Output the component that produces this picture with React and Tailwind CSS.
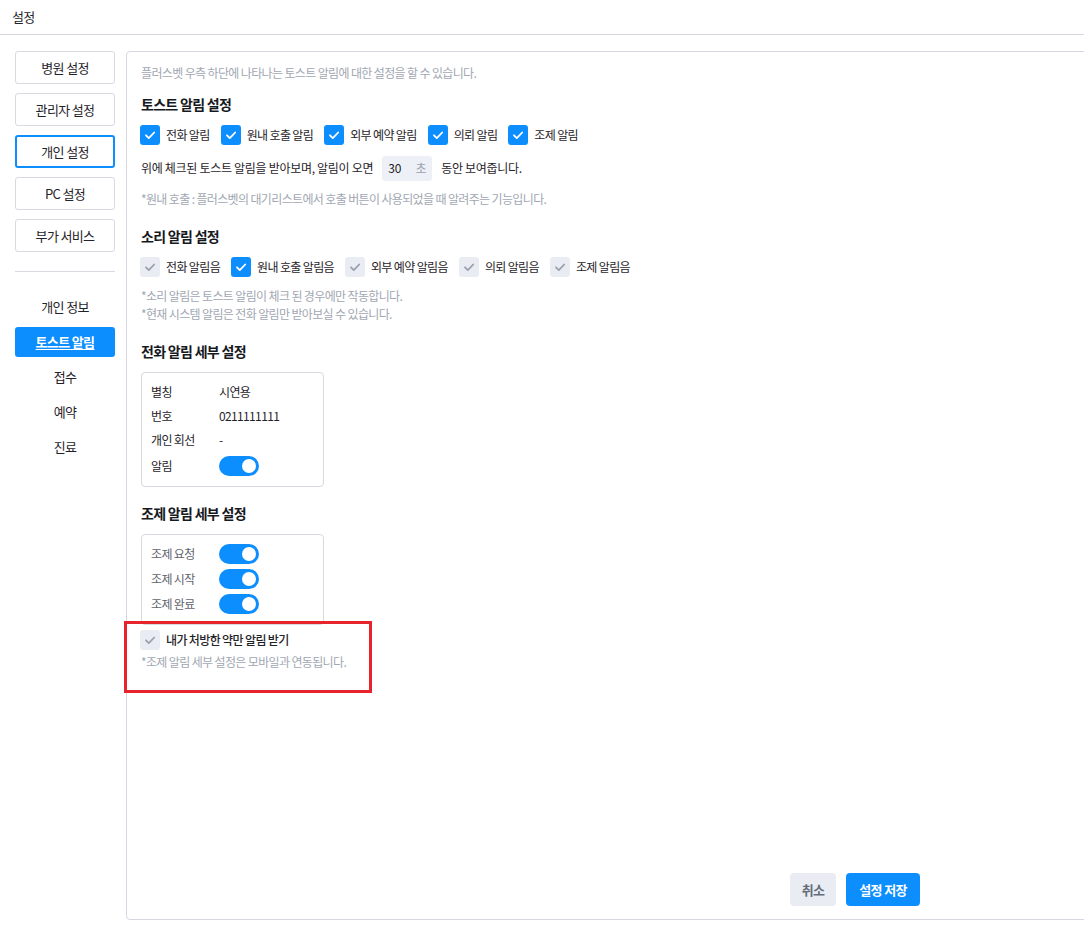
import React from 'react';

const FONT = "font-['Noto_Sans_CJK_KR','Noto_Sans',sans-serif] tracking-[-0.04em]";

const CheckIcon = ({ color }) => (
  <svg width="20" height="20" viewBox="0 0 20 20" fill="none">
    <path d="M6 10.3l2.8 2.8 5.4-5.6" stroke={color} strokeWidth="1.8" strokeLinecap="round" strokeLinejoin="round" />
  </svg>
);

const Check = ({ checked, label, bold }) => (
  <label className="flex items-center gap-[6px]">
    <span
      className={`flex h-5 w-5 shrink-0 items-center justify-center rounded-[3px] ${
        checked ? 'bg-[#0d8eff]' : 'bg-[#e9ecf3]'
      }`}
    >
      <CheckIcon color={checked ? '#ffffff' : '#9aa1ad'} />
    </span>
    <span className={`text-[12px] leading-5 text-[#1f2329] ${bold ? 'font-medium' : ''}`}>{label}</span>
  </label>
);

const Toggle = () => (
  <span className="flex h-5 w-10 items-center justify-end rounded-full bg-[#0d8eff] pr-[3px]">
    <span className="h-[14px] w-[14px] rounded-full bg-white" />
  </span>
);

const Heading = ({ children, className = '' }) => (
  <div className={`h-5 text-[14px] font-bold leading-5 tracking-[-0.05em] text-[#16191d] ${className}`}>{children}</div>
);

const Note = ({ children, className = '' }) => (
  <div className={`h-[18px] text-[12px] leading-[18px] text-[#a1a7b2] ${className}`}>{children}</div>
);

const navTop = ['병원 설정', '관리자 설정', '개인 설정', 'PC 설정', '부가 서비스'];
const navSub = ['개인 정보', '토스트 알림', '접수', '예약', '진료'];

const toast = ['전화 알림', '원내 호출 알림', '외부 예약 알림', '의뢰 알림', '조제 알림'];
const sounds = [
  { label: '전화 알림음', checked: false },
  { label: '원내 호출 알림음', checked: true },
  { label: '외부 예약 알림음', checked: false },
  { label: '의뢰 알림음', checked: false },
  { label: '조제 알림음', checked: false },
];

export default function App() {
  return (
    <div className={`relative h-[931px] w-[1084px] overflow-hidden bg-white ${FONT}`}>
      <div className="flex h-[35px] items-center border-b border-[#d8d6e2] pl-3 text-[13px] text-[#1f2329]">
        설정
      </div>

      <div className="flex gap-[11px] pl-[15px] pt-[16px]">
        {/* left nav */}
        <div className="flex w-[100px] shrink-0 flex-col">
          <div className="flex flex-col gap-[9px]">
            {navTop.map(item => (
              <button
                key={item}
                className={`flex h-[33px] items-center justify-center rounded-[3px] bg-white text-[13px] text-[#1f2329] ${
                  item === '개인 설정' ? 'border-2 border-[#0d8eff]' : 'border border-[#d9d9e0]'
                }`}
              >
                {item}
              </button>
            ))}
          </div>
          <div className="mt-[19px] h-px bg-[#d9d9e0]" />
          <div className="mt-[20px] flex flex-col gap-[5px]">
            {navSub.map(item => (
              <button
                key={item}
                className={`flex h-[30px] items-center justify-center rounded-[3px] text-[13px] ${
                  item === '토스트 알림'
                    ? 'bg-[#0d8eff] font-bold text-white underline underline-offset-2'
                    : 'text-[#1f2329]'
                }`}
              >
                {item}
              </button>
            ))}
          </div>
        </div>

        {/* panel */}
        <div className="flex h-[869px] w-[1000px] shrink-0 flex-col rounded-[4px] border border-[#d8d6e2] pl-[14px] pt-[12px]">
          <Note>플러스벳 우측 하단에 나타나는 토스트 알림에 대한 설정을 할 수 있습니다.</Note>

          <Heading className="mt-[12px]">토스트 알림 설정</Heading>
          <div className="mt-[11px] -ml-px flex items-center gap-[11px]">
            {toast.map(t => (
              <Check key={t} checked label={t} />
            ))}
          </div>
          <div className="mt-[10px] flex h-[26px] items-center text-[12px] tracking-[-0.025em] text-[#1f2329]">
            <span>위에 체크된 토스트 알림을 받아보며, 알림이 오면</span>
            <span className="mx-[9px] flex h-[25px] w-[50px] items-center justify-between rounded-[3px] bg-[#edf0f6] px-[6px]">
              <span className="tracking-normal">30</span>
              <span className="text-[#9aa1ad]">초</span>
            </span>
            <span>동안 보여줍니다.</span>
          </div>
          <Note className="mt-[9px]">*원내 호출 : 플러스벳의 대기리스트에서 호출 버튼이 사용되었을 때 알려주는 기능입니다.</Note>

          <Heading className="mt-[18px]">소리 알림 설정</Heading>
          <div className="mt-[11px] -ml-px flex items-center gap-[11px]">
            {sounds.map(s => (
              <Check key={s.label} checked={s.checked} label={s.label} />
            ))}
          </div>
          <Note className="mt-[10px]">*소리 알림은 토스트 알림이 체크 된 경우에만 작동합니다.</Note>
          <Note>*현재 시스템 알림은 전화 알림만 받아보실 수 있습니다.</Note>

          <Heading className="mt-[18px]">전화 알림 세부 설정</Heading>
          <div className="mt-[11px] w-[183px] rounded-[4px] border border-[#d9d9e0] pb-[6px] pl-[9px] pt-[7px] text-[12px] text-[#1f2329]">
            {[
              ['별칭', '시연용'],
              ['번호', '0211111111'],
              ['개인 회선', '-'],
            ].map(([k, v]) => (
              <div key={k} className="flex h-6 items-center">
                <span className="w-[68px]">{k}</span>
                <span>{v}</span>
              </div>
            ))}
            <div className="flex h-7 items-center">
              <span className="w-[68px]">알림</span>
              <Toggle />
            </div>
          </div>

          <Heading className="mt-[16px]">조제 알림 세부 설정</Heading>
          <div className="mt-[11px] w-[183px] rounded-[4px] border border-[#d9d9e0] pb-[8px] pl-[9px] pt-[6px] text-[12px] text-[#5f646d]">
            {['조제 요청', '조제 시작', '조제 완료'].map(k => (
              <div key={k} className="flex h-[25px] items-center">
                <span className="w-[68px]">{k}</span>
                <Toggle />
              </div>
            ))}
          </div>
          <div className="mt-[5px] -ml-px">
            <Check checked={false} label="내가 처방한 약만 알림 받기" bold />
          </div>
          <Note className="mt-[3px]">*조제 알림 세부 설정은 모바일과 연동됩니다.</Note>

          <div className="mt-auto mb-[13px] flex gap-[10px] pl-[649px]">
            <button className="flex h-[33px] w-[46px] items-center justify-center rounded-[4px] bg-[#e9ecf3] text-[13px] font-bold text-[#666d7a]">
              취소
            </button>
            <button className="flex h-[33px] w-[74px] items-center justify-center rounded-[4px] bg-[#0d8eff] text-[13px] font-bold text-white">
              설정 저장
            </button>
          </div>
        </div>
      </div>

      {/* annotation */}
      <div className="absolute left-[124px] top-[621px] h-[72px] w-[248px] border-[3px] border-[#e5242b]" />
    </div>
  );
}
